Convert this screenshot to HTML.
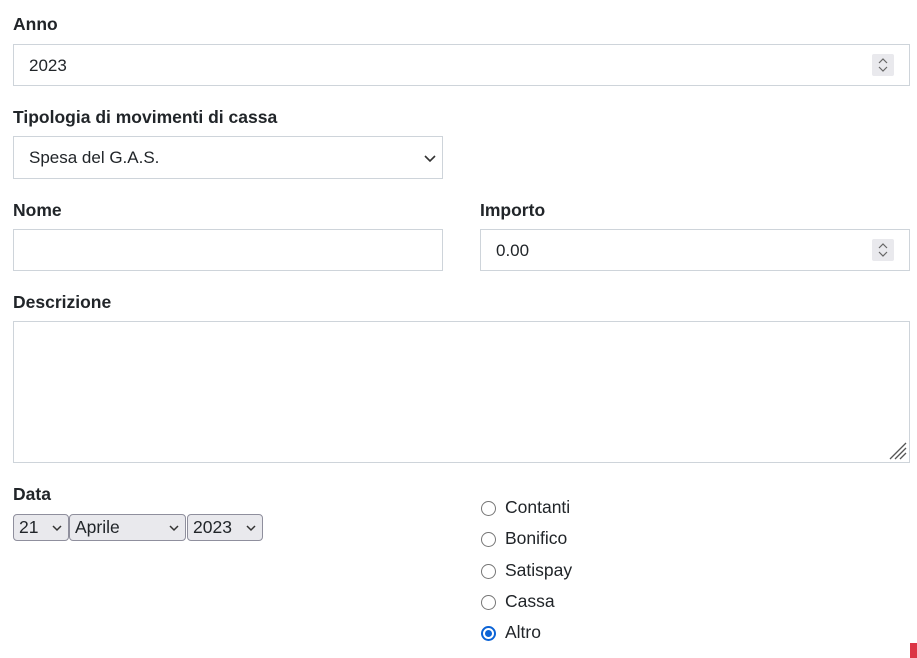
<!DOCTYPE html>
<html><head><style>
body{margin:0;width:917px;height:658px;background:#fff;font-family:"Liberation Sans",sans-serif;color:#212529;position:relative;overflow:hidden}
.l{position:absolute;font-weight:bold;font-size:17.5px}
.b{position:absolute;border:1px solid #ced4da;box-sizing:border-box;background:#fff;font-size:17px;color:#212529}
.t{position:absolute;left:15px;top:11px}
.sp{position:absolute;width:22px;height:22px;background:#e9e9ed;border-radius:2px}
.sel{position:absolute;top:514px;height:27px;box-sizing:border-box;border:1px solid #8f8f9d;border-radius:4px;background:#e9e9ed;font-size:17.5px;padding:2px 0 0 5px}
.r{position:absolute;left:480px;font-size:17.5px}
.r i{position:absolute;left:1px;top:2px;width:13px;height:13px;border:1px solid #767676;border-radius:50%}
.r span{position:absolute;left:25px;top:-2px;white-space:nowrap}
</style></head><body>
<div class="l" style="left:13px;top:14px">Anno</div>
<div class="b" style="left:13px;top:44px;width:897px;height:42px"><span class="t">2023</span>
<div class="sp" style="right:15px;top:9px"><svg width="22" height="22"><path d="M7 9l4-4 4 4M7 13l4 4 4-4" stroke="#666" fill="none" stroke-width="1.2"/></svg></div></div>
<div class="l" style="left:13px;top:107px">Tipologia di movimenti di cassa</div>
<div class="b" style="left:13px;top:136px;width:430px;height:43px"><span class="t">Spesa del G.A.S.</span>
<svg style="position:absolute;right:6px;top:16px" width="12" height="10"><path d="M1 3l5 5 5-5" stroke="#333" fill="none" stroke-width="1.6"/></svg></div>
<div class="l" style="left:13px;top:200px">Nome</div>
<div class="b" style="left:13px;top:229px;width:430px;height:42px"></div>
<div class="l" style="left:480px;top:200px">Importo</div>
<div class="b" style="left:480px;top:229px;width:430px;height:42px"><span class="t">0.00</span>
<div class="sp" style="right:15px;top:9px"><svg width="22" height="22"><path d="M7 9l4-4 4 4M7 13l4 4 4-4" stroke="#666" fill="none" stroke-width="1.2"/></svg></div></div>
<div class="l" style="left:13px;top:292px">Descrizione</div>
<div class="b" style="left:13px;top:321px;width:897px;height:142px">
<svg style="position:absolute;right:2px;bottom:2px" width="18" height="18"><path d="M17 1L1 17M17 6L6 17M17 11L11 17" stroke="#555" stroke-width="1.3"/></svg></div>
<div class="l" style="left:13px;top:484px">Data</div>
<div class="sel" style="left:13px;width:56px">21<svg style="position:absolute;right:6px;top:9px" width="10" height="8"><path d="M1 2l4 4 4-4" stroke="#333" fill="none" stroke-width="1.5"/></svg></div>
<div class="sel" style="left:69px;width:117px">Aprile<svg style="position:absolute;right:6px;top:9px" width="10" height="8"><path d="M1 2l4 4 4-4" stroke="#333" fill="none" stroke-width="1.5"/></svg></div>
<div class="sel" style="left:187px;width:76px">2023<svg style="position:absolute;right:6px;top:9px" width="10" height="8"><path d="M1 2l4 4 4-4" stroke="#333" fill="none" stroke-width="1.5"/></svg></div>
<div class="r" style="top:499px"><i></i><span>Contanti</span></div>
<div class="r" style="top:530px"><i></i><span>Bonifico</span></div>
<div class="r" style="top:562px"><i></i><span>Satispay</span></div>
<div class="r" style="top:593px"><i></i><span>Cassa</span></div>
<div class="r" style="top:624px"><i style="border:2px solid #0b63d6;width:11px;height:11px"><b style="position:absolute;left:2px;top:2px;width:7px;height:7px;border-radius:50%;background:#0b63d6"></b></i><span>Altro</span></div>
<div style="position:absolute;left:910px;top:643px;width:7px;height:15px;background:#dc3545"></div>
</body></html>
